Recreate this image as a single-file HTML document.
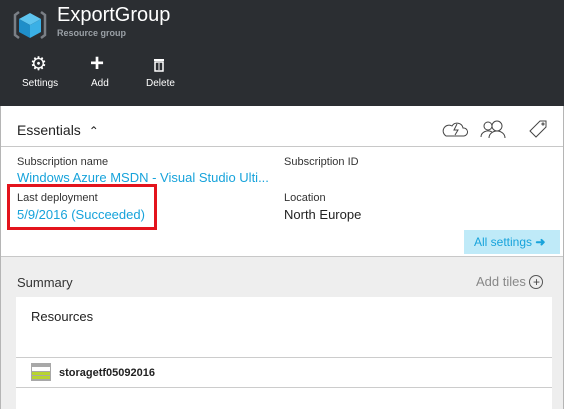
<!DOCTYPE html>
<html><head><style>
*{margin:0;padding:0;box-sizing:border-box}
body{width:564px;height:409px;overflow:hidden;font-family:"Liberation Sans",sans-serif;background:#fff;position:relative}
.hdr{position:absolute;left:0;top:0;width:564px;height:106px;background:#2b2e32;color:#fff}
.a{position:absolute}
.wrap{position:absolute;left:0;top:106px;width:564px;height:303px;border-left:1px solid #b5b5b5;border-right:1px solid #b5b5b5}
.lbl{font-size:11px;color:#333}
.lnk{font-size:13px;color:#17a3db}
.val{font-size:13px;color:#222}
</style></head><body>
<div class="hdr">
<svg class="a" style="left:13px;top:9px" width="34" height="32" viewBox="0 0 34 32">
<path d="M6 3 L2 6 V26 L6 29" stroke="#7a7f86" stroke-width="2.5" fill="none"/>
<path d="M28 3 L32 6 V26 L28 29" stroke="#7a7f86" stroke-width="2.5" fill="none"/>
<polygon points="17,4 28,10 17,16 6,10" fill="#5ec4ef"/>
<polygon points="6,10 17,16 17,29 6,23" fill="#1f8ec9"/>
<polygon points="28,10 17,16 17,29 28,23" fill="#3ab0e6"/>
</svg>
<div class="a" style="left:57px;top:4px;font-size:20px">ExportGroup</div>
<div class="a" style="left:57px;top:28px;font-size:9px;color:#9aa0a6;font-weight:bold">Resource group</div>
<div class="a" style="left:30px;top:53px;font-size:19px">⚙</div>
<div class="a" style="left:90px;top:50px;font-size:24px;font-weight:bold">+</div>
<svg class="a" style="left:153px;top:58px" width="12" height="14" viewBox="0 0 12 14"><rect x="1" y="1" width="10" height="2" fill="#fff"/><rect x="2" y="4" width="8" height="9" fill="none" stroke="#fff" stroke-width="1.5"/><line x1="6" y1="5" x2="6" y2="12" stroke="#fff"/></svg>
<div class="a" style="left:22px;top:78px;font-size:10px">Settings</div>
<div class="a" style="left:91px;top:78px;font-size:10px">Add</div>
<div class="a" style="left:146px;top:78px;font-size:10px">Delete</div>
</div>
<div class="wrap">
<div class="a" style="left:16px;top:16px;font-size:14px;color:#222">Essentials <span style="font-size:12px;margin-left:4px">&#8963;</span></div>
<svg class="a" style="left:441px;top:12px" width="110" height="22" viewBox="0 0 110 22" fill="none" stroke="#444" stroke-width="1">
<path d="M4 18 H22 A4 4 0 0 0 21 10 A6 6 0 0 0 10 8 A5 5 0 0 0 4 18Z"/><path d="M15 6 L12 12 H16 L13 17"/>
<circle cx="46" cy="8" r="4"/><path d="M39 19 A7 6 0 0 1 50 14"/><circle cx="55" cy="8" r="5"/><path d="M47 20 A8 7 0 0 1 63 20"/>
<path d="M88 13 L98 3 H104 V9 L94 19 Z"/><circle cx="101" cy="6" r="1"/>
</svg>
<div class="a" style="left:0;top:40px;width:562px;border-top:1px solid #c8c8c8"></div>
<div class="a lbl" style="left:16px;top:50px">Subscription name</div>
<div class="a lnk" style="left:16px;top:64px">Windows Azure MSDN - Visual Studio Ulti...</div>
<div class="a lbl" style="left:16px;top:86px">Last deployment</div>
<div class="a lnk" style="left:16px;top:101px">5/9/2016 (Succeeded)</div>
<div class="a lbl" style="left:283px;top:50px">Subscription ID</div>
<div class="a lbl" style="left:283px;top:86px">Location</div>
<div class="a val" style="left:283px;top:101px">North Europe</div>
<div class="a" style="left:6px;top:78px;width:150px;height:46px;border:3px solid #e3141d"></div>
<div class="a" style="left:463px;top:124px;width:96px;height:24px;background:#bfeaf8;color:#17a3db;font-size:12px;padding:5px 0 0 10px">All settings <b>&#10140;</b></div>
<div class="a" style="left:0;top:150px;width:562px;height:153px;background:#eeeeee;border-top:1px solid #c8c8c8">
<div class="a" style="left:16px;top:18px;font-size:13px;color:#333">Summary</div>
<div class="a" style="left:475px;top:17px;font-size:13px;color:#888">Add tiles <span style="display:inline-block;width:14px;height:14px;border:1px solid #555;border-radius:50%;font-size:12px;line-height:12px;text-align:center;color:#444">+</span></div>
<div class="a" style="left:15px;top:40px;width:536px;height:120px;background:#fff">
<div class="a" style="left:15px;top:12px;font-size:13px;color:#222">Resources</div>
<div class="a" style="left:0;top:60px;width:536px;border-top:1px solid #ccc"></div>
<div class="a" style="left:15px;top:66px;width:20px;height:18px;background:#a8a8a8"><div style="margin:4px 1px 0;height:4px;background:#fff"></div><div style="margin:1px 1px 0;height:3px;background:#b8d432"></div><div style="margin:1px 1px 0;height:3px;background:#b8d432"></div></div>
<div class="a" style="left:43px;top:70px;font-size:11px;font-weight:bold;color:#222">storagetf05092016</div>
<div class="a" style="left:0;top:90px;width:536px;border-top:1px solid #ccc"></div>
</div>
</div>
</div>
</body></html>
